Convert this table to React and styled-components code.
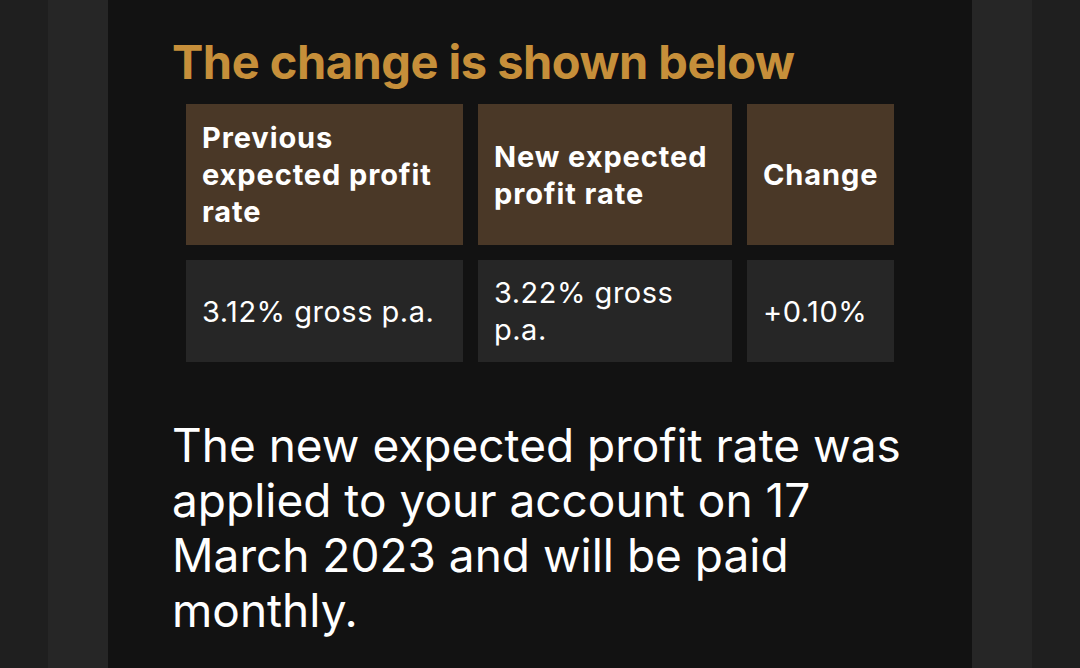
import React from "react";
import styled, { createGlobalStyle } from "styled-components";

const GlobalStyle = createGlobalStyle`
  html, body {
    margin: 0;
    padding: 0;
    background: #1f1f1f;
  }
  body {
    font-family: Inter, "Noto Sans", sans-serif;
  }
`;

const Page = styled.div`
  display: grid;
  grid-template-columns: 48px 60px 864px 60px 48px;
  min-height: 668px;
  background: #1f1f1f;
`;

const Gutter = styled.div`
  background: ${(p) => (p.inner ? "#262626" : "#1f1f1f")};
`;

const Main = styled.main`
  background: #121212;
  padding: 34px 64px 0 64px;
  color: #fff;
`;

const Title = styled.h2`
  margin: 0 0 14px 0;
  font-size: 47px;
  line-height: 56px;
  font-weight: 700;
  letter-spacing: -0.5px;
  color: #c68f3a;
`;

const Grid = styled.div`
  display: grid;
  grid-template-columns: 277px 254px 147px;
  gap: 15px;
  padding: 0 15px 0 14px;
`;

const Cell = styled.div`
  display: flex;
  align-items: center;
  padding: 14px 15px 14px 16px;
  font-size: 29px;
  line-height: 37px;
  font-weight: ${(p) => (p.head ? 700 : 400)};
  letter-spacing: ${(p) => (p.head ? "0.9px" : "0.5px")};
  background: ${(p) => (p.head ? "#4a3827" : "#262626")};
  color: #fff;
  min-height: ${(p) => (p.head ? "113px" : "74px")};
`;

const Note = styled.p`
  margin: 56px 0 0 0;
  font-size: 46px;
  line-height: 55px;
  font-weight: 400;
  color: #fff;
`;

const heads = ["Previous expected profit rate", "New expected profit rate", "Change"];
const values = ["3.12% gross p.a.", "3.22% gross p.a.", "+0.10%"];

export default function App() {
  return (
    <>
      <GlobalStyle />
      <Page>
        <Gutter />
        <Gutter inner />
        <Main>
          <Title>The change is shown below</Title>
          <Grid>
            {heads.map((h) => (
              <Cell head key={h}>{h}</Cell>
            ))}
            {values.map((v) => (
              <Cell key={v}>{v}</Cell>
            ))}
          </Grid>
          <Note>
            The new expected profit rate was applied to your account on 17 March 2023 and will be paid monthly.
          </Note>
        </Main>
        <Gutter inner />
        <Gutter />
      </Page>
    </>
  );
}
